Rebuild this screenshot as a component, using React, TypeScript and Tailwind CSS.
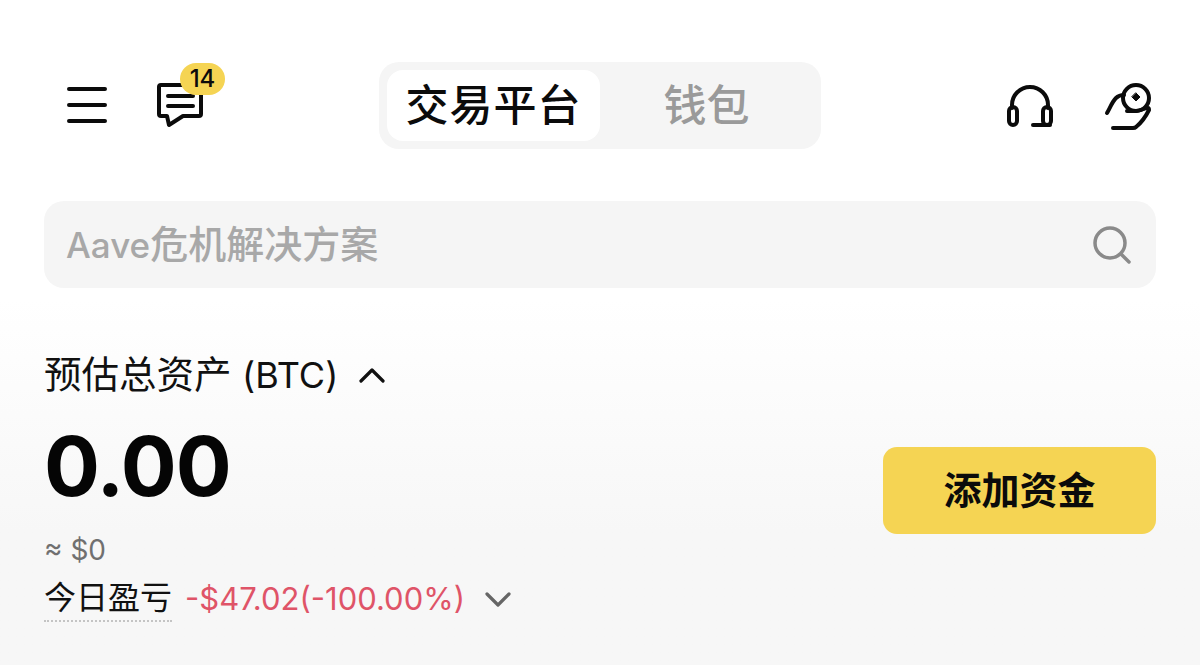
const CJK = "font-['Inter','Noto_Sans_CJK_SC',sans-serif]";

const MenuIcon = () => (
  <svg width="44" height="44" viewBox="0 0 44 44" fill="none" stroke="#0b0b0b" strokeWidth="4" strokeLinecap="round">
    <path d="M2 6h36M2 22h36M2 38h36" />
  </svg>
);

const MessageIcon = () => (
  <svg width="48" height="46" viewBox="0 0 48 46" fill="none" stroke="#0b0b0b" strokeWidth="4" strokeLinecap="round" strokeLinejoin="round">
    <path d="M11 34H5a2 2 0 0 1-2-2V5a2 2 0 0 1 2-2h38a2 2 0 0 1 2 2v27a2 2 0 0 1-2 2H27l-14 9z" />
    <path d="M12 14h25M12 24h25" />
  </svg>
);

const HeadsetIcon = () => (
  <svg width="48" height="44" viewBox="0 0 48 44" fill="none" stroke="#0b0b0b" strokeWidth="4" strokeLinecap="round" strokeLinejoin="round">
    <path d="M6 24v-3a18 18 0 0 1 36 0v3" />
    <rect x="3" y="23" width="8" height="18" rx="4" />
    <rect x="37" y="23" width="8" height="18" rx="4" />
    <path d="M27 41h17" />
  </svg>
);

const EarnIcon = () => (
  <svg width="50" height="50" viewBox="0 0 50 50" fill="none" stroke="#0b0b0b" strokeWidth="4" strokeLinecap="round" strokeLinejoin="round">
    <circle cx="32" cy="17" r="13" />
    <path d="M32 12l4 4-4 4-4-4z" fill="#0b0b0b" strokeWidth="1" />
    <path d="M3 32c3-5 5-11 9-15 2-2 5-3 8-3" />
    <path d="M23 30h9c4 0 8-3 12-3 1 0 1 1 1 2-3 6-8 13-13 17-1 1-2 1-3 1H9" />
  </svg>
);

const SearchIcon = () => (
  <svg width="40" height="40" viewBox="0 0 40 40" fill="none" stroke="#8a8a8a" strokeWidth="3.5" strokeLinecap="round">
    <circle cx="18" cy="18" r="15" />
    <path d="M29 29l8 8" />
  </svg>
);

const Chevron = ({ up, color }: { up?: boolean; color: string }) => (
  <svg width="28" height="16" viewBox="0 0 28 16" fill="none" stroke={color} strokeWidth="3.2" strokeLinecap="round" strokeLinejoin="round">
    <path d={up ? "M3 14L14 3l11 11" : "M3 3l11 11L25 3"} />
  </svg>
);

export default function App() {
  return (
    <div className={`${CJK} h-[665px] w-[1200px] overflow-hidden bg-gradient-to-b from-white from-45% to-[#f7f7f7] to-80% px-11`}>
      {/* top bar */}
      <header className="flex h-[149px] items-end justify-between">
        <div className="mb-[21px] ml-[23px] flex items-center gap-[45px]">
          <MenuIcon />
          <div className="relative">
            <MessageIcon />
            <span className="absolute -top-[19px] left-[24px] flex h-[32px] w-[45px] items-center justify-center rounded-full bg-[#f5d453] text-[24px] font-medium text-[#0b0b0b]">
              14
            </span>
          </div>
        </div>

        <div className="mr-[10px] flex h-[87px] w-[442px] items-center rounded-[20px] bg-[#f5f5f5] p-[8px]">
          <div className="flex h-[71px] w-[213px] items-center justify-center rounded-[16px] bg-white text-[43px] font-medium tracking-[1px] text-[#0b0b0b]">
            交易平台
          </div>
          <div className="flex flex-1 items-center justify-center text-[43px] font-medium text-[#9a9a9a]">
            钱包
          </div>
        </div>

        <div className="mb-[18px] mr-[2px] flex items-center gap-[50px]">
          <HeadsetIcon />
          <EarnIcon />
        </div>
      </header>

      {/* search */}
      <div className="mt-[52px] flex h-[87px] items-center justify-between rounded-[20px] bg-[#f5f5f5] pl-[22px] pr-[24px]">
        <span className="text-[38px] font-medium text-[#a8a8a8]">
          <span className="text-[35px]">Aave</span>危机解决方案
        </span>
        <SearchIcon />
      </div>

      {/* balance */}
      <div className="mt-[62px] flex items-center gap-[20px] text-[37.5px] leading-[50px] text-[#111]">
        <span>
          预估总资产 <span className="text-[36px]">(BTC)</span>
        </span>
        <Chevron up color="#111" />
      </div>

      <div className="flex items-start justify-between">
        <div>
          <div className="mt-[16px] text-[83px] font-bold leading-[100px] tracking-[-1px] text-[#050505]">0.00</div>
          <div className="mt-[14px] text-[28px] leading-[40px] text-[#707070]">≈ $0</div>
          <div className="mt-[6px] flex items-center text-[31px] leading-[44px]">
            <span className="border-b-2 border-dotted border-[#c4c4c4] text-[32px] text-[#111]">今日盈亏</span>
            <span className="ml-[13px] text-[#df5468]">-$47.02(-100.00%)</span>
            <span className="ml-[19px]">
              <Chevron color="#666" />
            </span>
          </div>
        </div>
        <button className="mt-[47px] flex h-[87px] w-[273px] items-center justify-center rounded-[14px] bg-[#f5d453] text-[38px] font-semibold text-[#0b0b0b]">
          添加资金
        </button>
      </div>
    </div>
  );
}
